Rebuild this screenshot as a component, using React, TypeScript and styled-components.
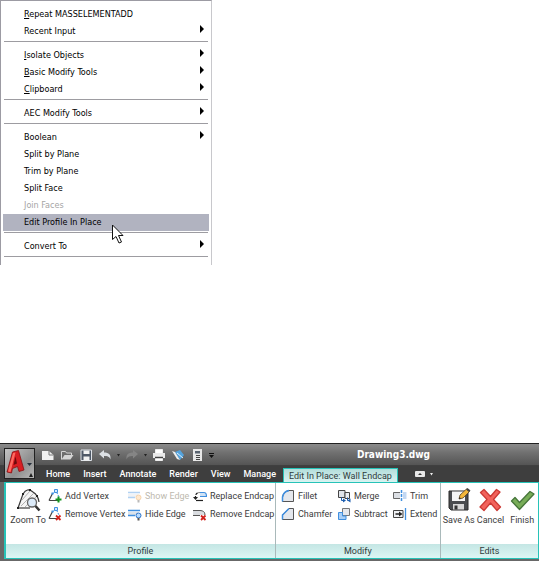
import React from "react";
import styled, { createGlobalStyle } from "styled-components";

const teal = "#27c3b8";
const menuFont = `"DejaVu Sans Condensed", "DejaVu Sans", sans-serif`;
const ribbonFont = `Roboto, "DejaVu Sans Condensed", sans-serif`;

const GlobalStyle = createGlobalStyle`
  * { box-sizing: border-box; }
  body { margin: 0; background: #fff; }
  button { font: inherit; color: inherit; background: none; border: 0; padding: 0; margin: 0; }
  svg { display: block; flex: none; }
`;

const Page = styled.div`
  display: flex;
  flex-direction: column;
  gap: 178px;
`;

/* ---------- context menu ---------- */

const Menu = styled.div`
  width: 212px;
  padding: 5px 2px 3px;
  border: 1px solid #9c9ba3;
  border-right-color: #c8c8cc;
  border-bottom: 0;
  font: 9px/17px ${menuFont};
`;

const MenuItem = styled.button<{ $active?: boolean }>`
  && {
    position: relative;
    display: flex;
    align-items: center;
    justify-content: space-between;
    width: 100%;
    height: 17px;
    padding: 0 5px 0 21px;
    text-align: left;
    color: #000;
    background: ${p => (p.$active ? "#b1b3c0" : "transparent")};
  }
  &&:disabled { color: #a5a5a5; }
`;

const Separator = styled.hr`
  height: 1px;
  margin: 1px 1px 5px;
  border: 0;
  background: #9d9ca1;
`;

const Cursor = styled.svg`
  position: absolute;
  left: 109px;
  top: 10px;
  z-index: 1;
`;

const Arrow = styled.svg`
  margin-bottom: 5px;
`;

const MenuArrow = () => (
  <Arrow width="5" height="8" viewBox="0 0 5 8"><path d="M1 0l4 4-4 4z" fill="#000" /></Arrow>
);

type Entry = { key?: string; text: string; sub?: boolean; disabled?: boolean; active?: boolean };
const groups: Entry[][] = [
  [{ key: "R", text: "epeat MASSELEMENTADD" }, { text: "Recent Input", sub: true }],
  [
    { key: "I", text: "solate Objects", sub: true },
    { key: "B", text: "asic Modify Tools", sub: true },
    { key: "C", text: "lipboard", sub: true },
  ],
  [{ text: "AEC Modify Tools", sub: true }],
  [
    { text: "Boolean", sub: true },
    { text: "Split by Plane" },
    { text: "Trim by Plane" },
    { text: "Split Face" },
    { text: "Join Faces", disabled: true },
    { text: "Edit Profile In Place", active: true },
  ],
  [{ text: "Convert To", sub: true }],
];

/* ---------- ribbon ---------- */

const Ribbon = styled.section`
  padding-bottom: 2px;
  font: 9px/12px ${ribbonFont};
  color: #3c3c3c;
  background: #686868;
`;

const Header = styled.header`
  display: grid;
  grid-template-columns: 39px 1fr;
  grid-template-rows: 22px 16px;
  border-top: 1px solid #222;
  background:
    linear-gradient(#8b8b8b, #707070 40%, #555 95%, #2e2e2e) top / 100% 22px no-repeat,
    #3e3e3e;
`;

const AppButton = styled.button`
  && {
    grid-row: 1 / 3;
    align-self: center;
    margin-left: 4px;
    width: 31px;
    height: 31px;
    border: 1px solid #222;
    background: linear-gradient(135deg, #c4c4c4, #8f8f8f 60%, #b8b8b8);
  }
`;

const TitleBar = styled.div`
  display: flex;
  align-items: center;
  min-width: 0;
`;

const QuickAccess = styled.div`
  display: flex;
  align-items: center;
  gap: 5px;
  padding-left: 2px;
`;

const Title = styled.h1`
  flex: 1;
  margin: 0;
  padding-left: 34px;
  text-align: center;
  font: bold 10px/14px ${menuFont};
  color: #fff;
`;

const TabBar = styled.nav`
  display: flex;
  align-items: stretch;
`;

const Tab = styled.button<{ $active?: boolean }>`
  && {
    padding: 0 6px 0 7px;
    white-space: nowrap;
    font-weight: ${p => (p.$active ? 400 : 500)};
    color: ${p => (p.$active ? "#303c3c" : "#fff")};
    ${p => p.$active && `
      margin-top: 2px;
      margin-left: 1px;
      padding: 0 5px;
      border: 1px solid ${teal};
      border-bottom: 0;
      background: linear-gradient(#b4dedb, #d9f3f1);
    `}
  }
`;

const TabToggle = styled.button`
  && {
    display: flex;
    align-items: center;
    gap: 5px;
    padding-left: 17px;
  }
`;

const Body = styled.div`
  display: grid;
  grid-template-columns: 271fr 165fr 98fr;
  gap: 1px;
  margin-left: 4px;
  border: 1px solid ${teal};
  border-left-width: 2px;
  background: #a9b9ba;
`;

const Panel = styled.div`
  display: flex;
  flex-direction: column;
  min-width: 0;
  background: #fff;
`;

const Tools = styled.div<{ $columns: string; $indent?: number }>`
  display: grid;
  grid-template-columns: ${p => p.$columns};
  flex: 1;
  min-height: 61px;
  padding: 4px 0 0 ${p => p.$indent ?? 0}px;
`;

const PanelLabel = styled.div`
  height: 14px;
  line-height: 14px;
  text-align: center;
  color: #2f3b3b;
  background: linear-gradient(#c4e6e4, #dcf6f4);
`;

const Stack = styled.div`
  display: flex;
  flex-direction: column;
`;

const Tool = styled.button`
  && {
    display: flex;
    align-items: center;
    gap: 3px;
    height: 18px;
    white-space: nowrap;
  }
  &&:disabled { color: #bdb9ae; }
  &&:disabled svg { opacity: 0.4; }
`;

const BigTool = styled.button`
  && {
    display: flex;
    flex-direction: column;
    align-items: center;
    gap: 2px;
    white-space: nowrap;
    align-self: start;
    padding-top: 1px;
  }
`;

const Small = ({ children }: { children: React.ReactNode }) => (
  <svg width="14" height="14" viewBox="0 0 14 14" fill="none">{children}</svg>
);
const Big = ({ children }: { children: React.ReactNode }) => (
  <svg width="25" height="24" viewBox="0 0 25 24" fill="none">{children}</svg>
);

const blue = "#3f8fe0";
const Vertex = () => (
  <>
    <path d="M1 11.500L4.500 4.500M1 11.500h9" stroke="#444" strokeWidth="1.200" />
    <path d="M4.500 5L8 2l3 6" stroke={blue} strokeDasharray="2 1" />
    <path d="M3.500 3.500h2v2h-2z" fill={blue} />
    <path d="M6.500.5h3v3h-3z" fill="#d4eaff" stroke={blue} />
  </>
);
const RedX = ({ x, y }: { x: number; y: number }) => (
  <path d={`M${x} ${y}l4.500 4.500m0-4.500l-4.500 4.500`} stroke="#d3211c" strokeWidth="1.800" />
);
const AddVertexIcon = () => <Small><Vertex /><path d="M10.500 7.500v6M7.500 10.500h6" stroke="#12931f" strokeWidth="2" /></Small>;
const RemoveVertexIcon = () => <Small><Vertex /><RedX x={8} y={8.500} /></Small>;
const EdgeIcon = ({ bulb = "#b9dcff" }: { bulb?: string }) => (
  <Small>
    <path d="M0 5h10v3H0z" fill="#dde3ea" />
    <path d="M0 3.500h12M0 8.500h7" stroke={blue} strokeWidth="1.300" />
    <circle cx="10.500" cy="8.500" r="2.500" fill={bulb} stroke={bulb === "#b9dcff" ? "#2e74c8" : "#e6902e"} />
    <path d="M10.500 11v2.500" stroke="#555" strokeWidth="2" />
  </Small>
);
const ReplaceIcon = () => (
  <Small>
    <path d="M7 4h6v3.500H7z" fill="#cfe2f5" />
    <path d="M7 3.500h4c2 0 2.500 2 2.500 4H7" stroke={blue} strokeWidth="1.200" />
    <path d="M2.500 10V7Q3 3.500 6.500 3.500" stroke="#222" strokeWidth="1.200" strokeDasharray="3 1" />
    <path d="M3 11.500h7" stroke="#222" strokeWidth="1.200" />
    <path d="M0 8h5l-2.500 3z" fill="#222" />
  </Small>
);
const RemoveEndcapIcon = () => (
  <Small>
    <path d="M0 4h9l3 4H0z" fill="#d9dce0" />
    <path d="M0 3.500h7c3 0 5 1.500 5 4.500M0 8.500h7" stroke="#555" />
    <RedX x={8} y={8.500} />
  </Small>
);
const FilletIcon = ({ d }: { d: string }) => (
  <Small>
    <path d={`${d}H12.500V12.500H1.500z`} fill="#e4e7ec" stroke="#555" />
    <path d={d} stroke={blue} strokeWidth="1.500" />
  </Small>
);
const MergeIcon = () => (
  <Small>
    <path d="M1.500 1.500h6.500v7h-6.500z" fill="#e0e4ea" stroke="#444" />
    <path d="M8 3.500h4.500v6H8z" fill="#eceff3" stroke="#444" />
    <path d="M4.500 8.500v3h2M10.500 8.500v3h2" stroke="#1f5fb0" />
    <path d="M6 9.500l3 2-3 2zM13.500 9.500l-3 2 3 2z" fill="#1f5fb0" />
  </Small>
);
const SubtractIcon = () => (
  <Small>
    <path d="M5.500 1.500h7v7h-7z" fill="#e5e7ec" stroke="#777" />
    <path d="M1.500 5.500h4v3.500h3.500v3.500H1.500z" fill="#a9cff7" stroke={blue} />
  </Small>
);
const TrimIcon = () => (
  <Small>
    <path d="M7 3.500H.5v6H7" fill="#dcdfe4" stroke="#666" />
    <path d="M10 3h3.500v7H10z" fill="#c3d8f2" />
    <path d="M8.500 1v12" stroke={blue} strokeWidth="1.500" strokeDasharray="3 1" />
  </Small>
);
const ExtendIcon = () => (
  <Small>
    <path d="M10 3.500H.5v7H10z" fill="#eef0f3" stroke="#444" />
    <path d="M2.500 7H8" stroke="#222" strokeWidth="1.500" />
    <path d="M6 4.500L9.500 7 6 9.500z" fill="#222" />
    <path d="M12.500 1v12" stroke={blue} strokeWidth="1.300" />
  </Small>
);
const ZoomIcon = () => (
  <Big>
    <path d="M2 20L7 6Q11-1 17 4q5 3 6 10" fill="#f4f4f4" stroke="#3a3a3a" strokeWidth="1.200" />
    <path d="M2 20h12" stroke="#3a3a3a" strokeWidth="1.200" />
    <path d="M5 18L18 5M9 19L21 8M6 12l8-9" stroke="#b0b0b0" />
    <path d="M1 19h2v2H1zM6 5h2v2H6zM13 1h2v2h-2zM20 7h2v2h-2z" fill="#222" />
    <circle cx="16" cy="14.500" r="4.500" fill="#dcebfa" stroke="#666" strokeWidth="1.300" />
    <path d="M19.500 18l4 4.500" stroke="#333" strokeWidth="2.500" />
  </Big>
);
const SaveAsIcon = () => (
  <Big>
    <path d="M3 3h19v19H5l-2-2z" fill="#4a4c4f" stroke="#2b2b2b" />
    <path d="M6 3.500h13V13H6z" fill="#f5f5f5" />
    <path d="M7 16h11v5.500H7z" fill="#d7d7d7" />
    <path d="M8.500 17.500h3v4h-3z" fill="#333" />
    <path d="M13 11l1-4 6.500-6 3 2.500-6.500 6.500z" fill="#f3b63a" stroke="#5b4420" strokeWidth=".8" />
    <path d="M13 11l.5-2 1.500 1.500z" fill="#222" />
    <path d="M20 1.500L21.500 0 24.500 2.500 23 4z" fill="#444" />
  </Big>
);
const CancelIcon = () => (
  <Big>
    <path d="M2.500 4.500L6 1.500l6.500 7 6-7L22 4l-6.500 7.500 7 7.500-3.500 3.500-6.500-7.500-6.500 7.500-4-3.500 7-7.500z" fill="#f2635c" stroke="#cc3a35" strokeWidth="1.300" strokeLinejoin="round" />
  </Big>
);
const FinishIcon = () => (
  <Big>
    <path d="M1.500 13L5 9.500l4.500 5L20 3.500l4 2.500L9.500 21.500z" fill="#78ad58" stroke="#46753a" strokeWidth="1.300" strokeLinejoin="round" />
  </Big>
);

const Caret = () => <svg width="3" height="3" viewBox="0 0 3 3"><path d="M0 0h3L1.500 2.500z" fill="#222" /></svg>;

const quick: [string, React.ReactNode][] = [
  ["New", <Small><path d="M1 3h7l4.500 4v5H1z" fill="#f1f1f1" /><path d="M8 3v4h4.500" stroke="#777" /></Small>],
  ["Open", <Small><path d="M1.500 11.500v-8h4l1 1.500h5v2" stroke="#d5d5d5" /><path d="M1.500 11.500l3-4.500h9l-3 4.500z" fill="#d5d5d5" /></Small>],
  ["Save", <Small><path d="M2 2h10.500v10.500H2z" fill="#4f5967" stroke="#dfe3e8" /><path d="M4.500 2.500h6V6h-6zM4.500 8.500h6v4h-6z" fill="#f2f2f2" /></Small>],
  ["Undo", <Small><path d="M1 6l5-4v2.500c5 0 7 2 6.500 7-1-3-3-3.500-6.500-3.500v2.500z" fill="#dce0e4" /></Small>],
  ["", <Caret />],
  ["Redo", <Small><path d="M13 6L8 2v2.500c-5 0-7 2-6.500 7 1-3 3-3.500 6.500-3.500v2.500z" fill="#858585" /></Small>],
  ["", <Caret />],
  ["Print", <Small><path d="M3.500 5V1.500h7V5M3.500 9.500h7v3h-7z" fill="#fff" stroke="#eee" /><path d="M1 5h12v5H1z" fill="#eaeaea" /><path d="M3 9.500h8" stroke="#444" strokeWidth="1.500" /></Small>],
  ["Match properties", <Small><path d="M4 4l5-2 4 5-4 5z" fill="#54a4de" /><path d="M1 3l3 1 5 8-3-1z" fill="#eee" /><path d="M6 5l6 5" stroke="#dff0ff" /></Small>],
  ["Properties", <Small><path d="M3 1h9v12H3z" fill="#e8e8e8" /><path d="M5 3h5v2.500H5z" fill="#5a6470" /><path d="M6 7.500h4M6 9.500h4M6 11.500h4" stroke="#444" /></Small>],
  ["Customize", <svg width="5" height="5" viewBox="0 0 5 5"><path d="M0 0h5v1H0zM0 2h5L2.500 5z" fill="#111" /></svg>],
];

export default function App() {
  return (
    <Page>
      <GlobalStyle />
      <Menu role="menu">
        {groups.map((group, i) => (
          <React.Fragment key={i}>
            {group.map(e => (
              <MenuItem key={e.text} role="menuitem" disabled={e.disabled} $active={e.active}>
                <span>{e.key && <u>{e.key}</u>}{e.text}</span>
                {e.sub && <MenuArrow />}
                {e.active && (
                  <Cursor width="12" height="20" viewBox="0 0 12 20">
                    <path d="M.5 1v14.500L4 12.500l3 6.500 2.500-1-3-6.500H11z" fill="#fff" stroke="#111" />
                  </Cursor>
                )}
              </MenuItem>
            ))}
            <Separator />
          </React.Fragment>
        ))}
      </Menu>

      <Ribbon>
        <Header>
          <AppButton aria-label="Application menu">
            <svg width="29" height="29" viewBox="0 0 29 29">
              <path d="M2 23L7.500 3l6-1.500L19 21l-5 1.500-1.500-5-5 2L6.500 24z" fill="#d81e22" stroke="#8a1013" strokeWidth=".8" />
              <path d="M10.500 7.500L8.500 16l3.500-1.500z" fill="#6e0a0d" />
              <path d="M3 22.500L8 4l2.500-.5L5.500 23z" fill="#ff6a60" />
              <path d="M22 14h5l-2.500 3z" fill="#26303c" />
              <path d="M24 28l2-4 2 4z" fill="#1d1d1d" />
            </svg>
          </AppButton>
          <TitleBar>
            <QuickAccess>
              {quick.map(([name, icon], i) => <button key={i} aria-label={name || "More"}>{icon}</button>)}
            </QuickAccess>
            <Title>Drawing3.dwg</Title>
          </TitleBar>
          <TabBar>
            {["Home", "Insert", "Annotate", "Render", "View", "Manage"].map(t => <Tab key={t}>{t}</Tab>)}
            <Tab $active>Edit In Place: Wall Endcap</Tab>
            <TabToggle aria-label="Minimize ribbon">
              <svg width="10" height="6" viewBox="0 0 10 6"><rect width="10" height="6" rx="1" fill="#e8e8e8" /><path d="M3 4l2-2 2 2z" fill="#333" /></svg>
              <svg width="3" height="3" viewBox="0 0 3 3"><path d="M0 0h3L1.500 2.500z" fill="#eee" /></svg>
            </TabToggle>
          </TabBar>
        </Header>
        <Body>
          <Panel>
            <Tools $columns="40px 80px 65px 1fr" $indent={2}>
              <BigTool><ZoomIcon />Zoom To</BigTool>
              <Stack>
                <Tool><AddVertexIcon />Add Vertex</Tool>
                <Tool><RemoveVertexIcon />Remove Vertex</Tool>
              </Stack>
              <Stack>
                <Tool disabled><EdgeIcon bulb="#ffc98a" />Show Edge</Tool>
                <Tool><EdgeIcon />Hide Edge</Tool>
              </Stack>
              <Stack>
                <Tool><ReplaceIcon />Replace Endcap</Tool>
                <Tool><RemoveEndcapIcon />Remove Endcap</Tool>
              </Stack>
            </Tools>
            <PanelLabel>Profile</PanelLabel>
          </Panel>
          <Panel>
            <Tools $columns="56px 56px 1fr" $indent={5}>
              <Stack>
                <Tool><FilletIcon d="M1.500 12.500V8Q2.500 2.500 8 1.500" />Fillet</Tool>
                <Tool><FilletIcon d="M1.500 12.500V8L8 1.500" />Chamfer</Tool>
              </Stack>
              <Stack>
                <Tool><MergeIcon />Merge</Tool>
                <Tool><SubtractIcon />Subtract</Tool>
              </Stack>
              <Stack>
                <Tool><TrimIcon />Trim</Tool>
                <Tool><ExtendIcon />Extend</Tool>
              </Stack>
            </Tools>
            <PanelLabel>Modify</PanelLabel>
          </Panel>
          <Panel>
            <Tools $columns="1fr 1fr 1fr" $indent={2}>
              <BigTool><SaveAsIcon />Save As</BigTool>
              <BigTool><CancelIcon />Cancel</BigTool>
              <BigTool><FinishIcon />Finish</BigTool>
            </Tools>
            <PanelLabel>Edits</PanelLabel>
          </Panel>
        </Body>
      </Ribbon>
    </Page>
  );
}
